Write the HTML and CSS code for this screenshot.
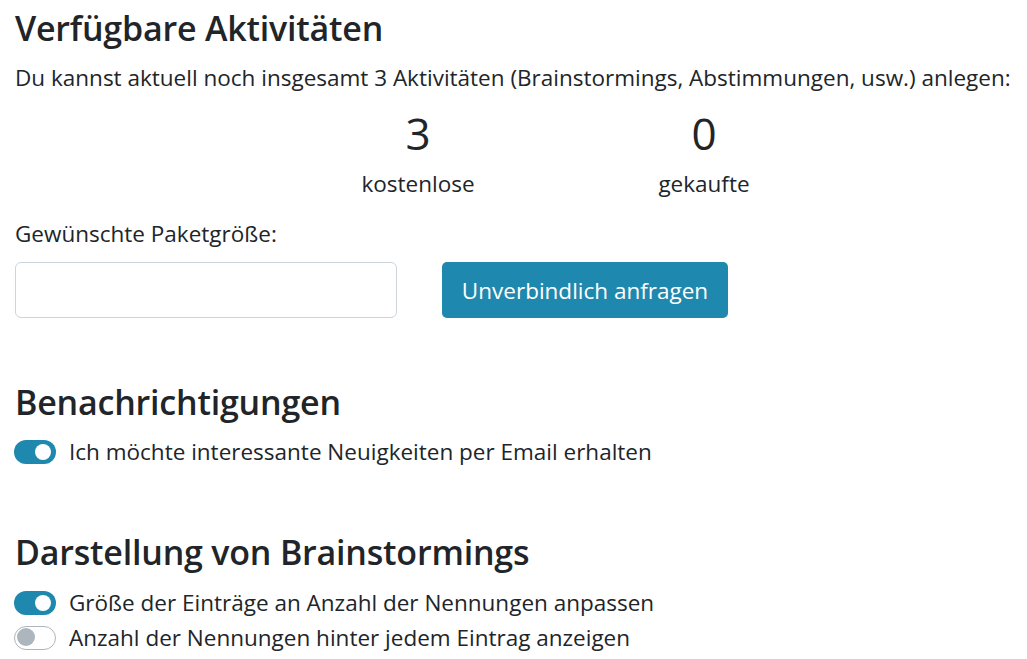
FILE: index.html
```html
<!DOCTYPE html>
<html lang="de">
<head>
<meta charset="utf-8">
<title>Einstellungen</title>
<link rel="stylesheet" href="styles.css">
</head>
<body>
<main class="page">
  <section class="block block-first">
    <h2 class="title">Verfügbare Aktivitäten</h2>
    <p class="lead">Du kannst aktuell noch insgesamt 3 Aktivitäten (Brainstormings, Abstimmungen, usw.) anlegen:</p>
    <div class="stats">
      <div class="stat">
        <div class="stat-num">3</div>
        <div class="stat-label">kostenlose</div>
      </div>
      <div class="stat">
        <div class="stat-num">0</div>
        <div class="stat-label">gekaufte</div>
      </div>
    </div>
    <label class="field-label" for="size">Gewünschte Paketgröße:</label>
    <div class="form-row">
      <input class="input" id="size" type="text">
      <button class="btn" type="button">Unverbindlich anfragen</button>
    </div>
  </section>

  <section class="block block-notify">
    <h2 class="title">Benachrichtigungen</h2>
    <div class="switch-row">
      <span class="switch on"><span class="knob"></span></span>
      <span class="switch-text">Ich möchte interessante Neuigkeiten per Email erhalten</span>
    </div>
  </section>

  <section class="block block-display">
    <h2 class="title">Darstellung von Brainstormings</h2>
    <div class="switch-row">
      <span class="switch on"><span class="knob"></span></span>
      <span class="switch-text">Größe der Einträge an Anzahl der Nennungen anpassen</span>
    </div>
    <div class="switch-row">
      <span class="switch off"><span class="knob"></span></span>
      <span class="switch-text">Anzahl der Nennungen hinter jedem Eintrag anzeigen</span>
    </div>
  </section>
</main>
</body>
</html>
```

FILE: styles.css
```css
* { box-sizing: border-box; }

html, body {
  margin: 0;
  padding: 0;
  background: #ffffff;
}

body {
  font-family: "Open Sans", "Noto Sans", "DejaVu Sans", sans-serif;
  color: #212529;
  font-size: 22.5px;
}

.page {
  padding: 0 15px;
}

.title {
  margin: 0;
  font-size: 34px;
  line-height: 40px;
  font-weight: 600;
  letter-spacing: -0.2px;
}

.block {
  display: flex;
  flex-direction: column;
}

.block-first {
  padding-top: 8px;
}

.lead {
  margin: 15px 0 0;
  line-height: 30px;
  white-space: nowrap;
}

.stats {
  display: flex;
  margin: 15px 0 0 260px;
}

.stat {
  width: 286px;
  text-align: center;
}

.stat-num {
  font-size: 44px;
  line-height: 50px;
  font-weight: 400;
}

.stat-label {
  margin-top: 11px;
  line-height: 30px;
}

.field-label {
  margin-top: 20px;
  line-height: 30px;
}

.form-row {
  display: flex;
  gap: 45px;
  margin-top: 13px;
}

.input {
  width: 382px;
  height: 56px;
  border: 1.5px solid #ced4da;
  border-radius: 6px;
  background: #fff;
  font: inherit;
  padding: 0 14px;
}

.btn {
  width: 286px;
  height: 56px;
  border: none;
  border-radius: 5px;
  background: #1f88ae;
  color: #ffffff;
  font: inherit;
  padding: 0;
}

.block-notify {
  margin-top: 64px;
}

.block-notify .switch-row {
  margin-top: 12px;
}

.block-display {
  margin-top: 63px;
}

.block-display .switch-row:first-of-type {
  margin-top: 13px;
}

.switch-row {
  display: flex;
  align-items: center;
  height: 35px;
}

.switch {
  position: relative;
  width: 42px;
  height: 24px;
  border-radius: 12px;
  flex: none;
  margin-left: -1px;
  margin-right: 13px;
}

.switch.on {
  background: #1f88ae;
}

.switch.off {
  background: #ffffff;
  border: 1.5px solid #adb5bd;
}

.knob {
  position: absolute;
  border-radius: 50%;
}

.switch.on .knob {
  top: 4px;
  right: 5px;
  width: 16px;
  height: 16px;
  background: #ffffff;
}

.switch.off .knob {
  top: 1.5px;
  left: 1.5px;
  width: 18px;
  height: 18px;
  background: #adb5bd;
}

.switch-text {
  line-height: 35px;
  white-space: nowrap;
}
```
